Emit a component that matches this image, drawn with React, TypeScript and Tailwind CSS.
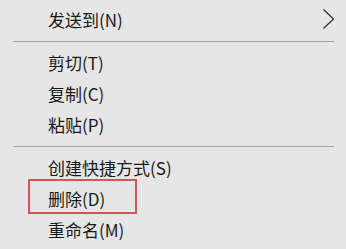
import React from "react";

const font = { fontFamily: '"Noto Sans CJK SC", "Noto Sans", sans-serif' };

const Item = ({ label, children }: { label: string; children?: React.ReactNode }) => (
  <div className="relative flex h-[31px] items-center pl-[48px] text-[17px] text-[#1a1a1a]">
    <span className="leading-none">{label}</span>
    {children}
  </div>
);

const Sep = () => (
  <div className="flex h-[12px] items-center pl-[13px] pr-[12px]">
    <div className="h-px w-full bg-[#a3a3a3]" />
  </div>
);

export default function App() {
  return (
    <div className="h-[249px] w-[346px] overflow-hidden bg-[#e6e6e6] pt-[4px]" style={font}>
      <Item label="发送到(N)">
        <svg className="absolute right-[11px] top-[4px]" width="13" height="22" viewBox="0 0 13 22">
          <polyline points="1.5,1.5 11.5,11 1.5,20.5" fill="none" stroke="#2a2a2a" strokeWidth="1.2" />
        </svg>
      </Item>
      <Sep />
      <Item label="剪切(T)" />
      <Item label="复制(C)" />
      <Item label="粘贴(P)" />
      <Sep />
      <Item label="创建快捷方式(S)" />
      <Item label="删除(D)">
        <div className="absolute left-[28px] top-[-4px] h-[35px] w-[109px] border-2 border-[#d2555a]" />
      </Item>
      <Item label="重命名(M)" />
      <div className="mt-[4px] ml-[13px] mr-[12px] h-px bg-[#a3a3a3]" />
    </div>
  );
}
